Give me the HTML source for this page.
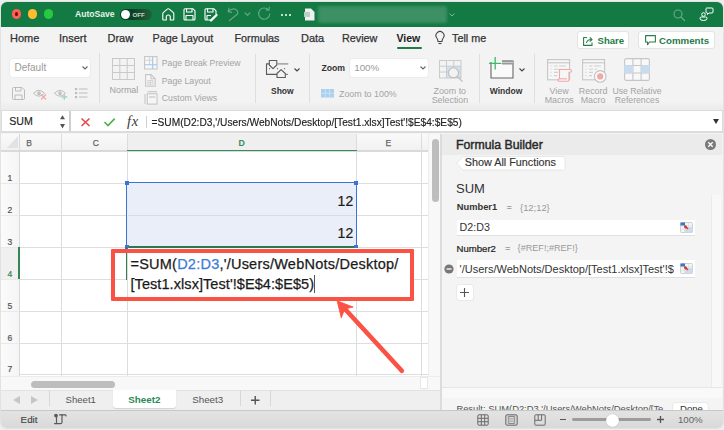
<!DOCTYPE html>
<html><head><meta charset="utf-8">
<style>
*{box-sizing:border-box;margin:0;padding:0}
html,body{width:724px;height:430px;overflow:hidden;background:#eeeeee;font-family:"Liberation Sans",sans-serif;color:#222}
.a{position:absolute}
.t{position:absolute;white-space:nowrap;line-height:1}
svg{position:absolute;overflow:visible}
#win{position:absolute;left:1px;top:2px;width:722px;height:426px;border-radius:6px;overflow:hidden;background:#f3f3f3;box-shadow:0 0 0 1px #e2e2e2}
</style></head><body>
<div id="win"></div>
<!-- TITLE BAR -->
<div class="a" style="left:1px;top:2px;width:722px;height:25px;background:#137a43;border-radius:6px 6px 0 0"></div>
<div class="a" style="left:11.6px;top:9.4px;width:9.7px;height:9.7px;border-radius:50%;background:#fe5f57"></div>
<div class="a" style="left:14.65px;top:12.45px;width:3.6px;height:3.6px;border-radius:50%;background:#7a0a05"></div>
<div class="a" style="left:27.7px;top:9.4px;width:9.7px;height:9.7px;border-radius:50%;background:#febc2e"></div>
<div class="a" style="left:43.7px;top:9.4px;width:9.7px;height:9.7px;border-radius:50%;background:#28c840"></div>
<div class="t" style="left:75px;top:10px;font-size:8.6px;font-weight:bold;color:#e8f2ec">AutoSave</div>
<div class="a" style="left:119.5px;top:9px;width:32px;height:11.3px;border-radius:6px;background:linear-gradient(90deg,#0b4024 40%,#22603c)"></div>
<div class="a" style="left:120.5px;top:10px;width:9px;height:9px;border-radius:50%;background:#fff"></div>
<div class="t" style="left:132.5px;top:11.8px;font-size:6.2px;font-weight:bold;color:#c9d6ce">OFF</div>
<svg style="left:161.5px;top:7.5px" width="13" height="13" viewBox="0 0 13 13" fill="none" stroke="#fff" stroke-width="1.1" stroke-linejoin="round"><path d="M0.8 5.8 Q0.8 5 1.5 4.4 L5.3 1.1 Q6.3 0.3 7.3 1.1 L11.1 4.4 Q11.8 5 11.8 5.8 V11.4 Q11.8 12 11.2 12 H8.3 V9 A2 2 0 0 0 4.3 9 V12 H1.4 Q0.8 12 0.8 11.4 Z"/></svg>
<svg style="left:183px;top:8px" width="13" height="13" viewBox="0 0 13 13" fill="none" stroke="#fff" stroke-width="1.1" stroke-linejoin="round"><path d="M1 2 Q1 0.8 2 0.8 H10 L12 2.8 V11 Q12 12 11 12 H2 Q1 12 1 11 Z"/><path d="M3.5 0.8 V4 H9 V0.8"/><path d="M3 12 V7.5 H10 V12"/></svg>
<svg style="left:204.2px;top:8px" width="13" height="13" viewBox="0 0 13 13" fill="none" stroke="#fff" stroke-width="1.1" stroke-linejoin="round"><path d="M7 12 H2 Q1 12 1 11 V2 Q1 0.8 2 0.8 H10 L12 2.8 V6"/><path d="M3.5 0.8 V4 H9 V0.8"/><path d="M3 12 V7.5 H7"/><path d="M7 12.5 L12.5 7" stroke-width="2.4" stroke-linecap="round"/></svg>
<svg style="left:222px;top:4px" width="54" height="20" viewBox="0 0 54 20" fill="none" stroke="#62a882" stroke-width="1.2" stroke-linecap="round" stroke-linejoin="round"><path d="M6.5 7.2 Q10 3.8 13.5 5.2 Q16.5 6.8 15.5 10 L7.5 16.5"/><path d="M7 4.2 L6.2 7.6 L9.6 8.3"/><path d="M23.2 9 L25.5 11.3 L27.8 9"/><path d="M46.5 6 A5.6 5.6 0 1 0 47.8 10"/><path d="M44.2 5.8 L47 5.9 L47.3 3.2"/></svg>
<div class="a" style="left:281px;top:13.5px;width:2.2px;height:2.2px;border-radius:50%;background:#fff;box-shadow:4px 0 0 #fff,8px 0 0 #fff"></div>
<svg style="left:304px;top:8px" width="11" height="13" viewBox="0 0 11 13"><path d="M1 0.5 H7 L10.5 4 V12.5 H1 Z" fill="#f0f0f0"/><rect x="0" y="4" width="6" height="5" fill="#b5d3c0"/></svg>
<div class="a" style="left:318px;top:6px;width:129px;height:17px;background:#3c9064;filter:blur(1.5px);border-radius:2px"></div>
<svg style="left:449px;top:12.5px" width="6" height="4" viewBox="0 0 6 4" fill="none" stroke="#7bb898" stroke-width="1"><path d="M0.5 0.5 L3 3 L5.5 0.5"/></svg>
<svg style="left:673px;top:8.5px" width="13" height="13" viewBox="0 0 13 13" fill="none" stroke="#6aad89" stroke-width="1.1"><circle cx="5" cy="5" r="4"/><path d="M8 8 L12 12"/></svg>
<svg style="left:699px;top:7px" width="15" height="15" viewBox="0 0 15 15" fill="none" stroke="#fff" stroke-width="1"><circle cx="4.5" cy="7.5" r="1.8"/><path d="M1 11 Q1 10 2.5 10 H6.5 Q8 10 8 11 V11.5 Q8 13.5 4.5 13.5 Q1 13.5 1 11.5 Z"/><path d="M7.5 1 H13 Q14 1 14 2 V5 Q14 6 13 6 H10 L8.5 7.5 V6 Q7 6 7 5 V2 Q7 1 7.5 1 Z"/></svg>

<!-- TABS -->
<div class="t" style="left:10px;top:33px;font-size:11px;color:#333;-webkit-text-stroke:0.25px #333">Home</div>
<div class="t" style="left:59px;top:33px;font-size:11px;color:#333;-webkit-text-stroke:0.25px #333">Insert</div>
<div class="t" style="left:107.5px;top:33px;font-size:11px;color:#333;-webkit-text-stroke:0.25px #333">Draw</div>
<div class="t" style="left:152.5px;top:33px;font-size:10.8px;color:#333;-webkit-text-stroke:0.25px #333">Page Layout</div>
<div class="t" style="left:234.5px;top:33px;font-size:10.8px;color:#333;-webkit-text-stroke:0.25px #333">Formulas</div>
<div class="t" style="left:301px;top:33px;font-size:11px;color:#333;-webkit-text-stroke:0.25px #333">Data</div>
<div class="t" style="left:342px;top:33px;font-size:10.8px;color:#333;-webkit-text-stroke:0.25px #333">Review</div>
<div class="t" style="left:396.5px;top:33px;font-size:10.5px;font-weight:bold;color:#222">View</div>
<div class="a" style="left:396.5px;top:47px;width:25px;height:2px;background:#1f7a46;border-radius:1px"></div>
<svg style="left:434.5px;top:32px" width="10" height="13" viewBox="0 0 10 13" fill="none" stroke="#444" stroke-width="1.1"><path d="M3 9.5 Q3 7.5 1.8 6 A4 4 0 1 1 8.2 6 Q7 7.5 7 9.5 Z"/><path d="M3.5 11.5 H6.5"/></svg>
<div class="t" style="left:452px;top:33px;font-size:10.8px;color:#333;-webkit-text-stroke:0.25px #333">Tell me</div>
<div class="a" style="left:577px;top:31px;width:52px;height:18px;background:#fff;border:1px solid #e3e3e3;border-radius:3px"></div>
<svg style="left:583.4px;top:35.5px" width="11" height="10" viewBox="0 0 11 10" fill="none" stroke="#2a7d4f" stroke-width="1.1" stroke-linejoin="round"><path d="M4 1.5 H0.6 V9.4 H9 V6.5"/><path d="M3.5 7 Q4 3.5 8.5 3.5"/><path d="M6.8 1.3 L9 3.5 L6.8 5.7"/></svg>
<div class="t" style="left:597.5px;top:35.5px;font-size:9.6px;font-weight:bold;color:#1f7a46">Share</div>
<div class="a" style="left:638px;top:31px;width:77px;height:18px;background:#fff;border:1px solid #e3e3e3;border-radius:3px"></div>
<svg style="left:644.6px;top:35.2px" width="11" height="10.5" viewBox="0 0 11 10.5" fill="none" stroke="#2a7d4f" stroke-width="1.1" stroke-linejoin="round"><path d="M0.6 0.6 H10.4 V7 H4.5 L2.5 9.6 V7 H0.6 Z"/></svg>
<div class="t" style="left:659px;top:35.5px;font-size:9.7px;font-weight:bold;color:#1f7a46">Comments</div>

<!-- RIBBON -->
<div class="a" style="left:1px;top:101px;width:722px;height:9.5px;background:linear-gradient(#f3f3f3,#eaeaea)"></div>

<!-- RIBBON CONTENT -->
<div class="a" style="left:9.7px;top:59px;width:80.5px;height:17.5px;background:#fff;border-radius:3px;box-shadow:0 0 0 0.5px #e4e4e4"></div>
<div class="t" style="left:14.5px;top:62.5px;font-size:10px;color:#9a9a9a">Default</div>
<svg style="left:82px;top:66px" width="6" height="4" viewBox="0 0 6 4" fill="none" stroke="#666" stroke-width="1.1"><path d="M0.5 0.5 L3 3 L5.5 0.5"/></svg>
<svg style="left:12px;top:86.5px" width="13" height="13" viewBox="0 0 13 13" fill="none" stroke="#bcbcbc" stroke-width="1"><path d="M0.5 1.5 Q0.5 0.5 1.5 0.5 H10 L12.5 3 V11.5 Q12.5 12.5 11.5 12.5 H1.5 Q0.5 12.5 0.5 11.5 Z"/><path d="M3.5 0.5 V4 H9 V0.5"/><path d="M3 12.5 V8 H10 V12.5"/></svg>
<svg style="left:33px;top:87px" width="14" height="13" viewBox="0 0 14 13" fill="none" stroke="#bcbcbc" stroke-width="1"><path d="M0.5 6.3 Q6 0.5 11.5 6.3 Q6 12 0.5 6.3 Z"/><circle cx="6" cy="6.3" r="1.4" fill="#f3f3f3"/><circle cx="6" cy="6.3" r="0.6" fill="#bcbcbc"/><path d="M8 7.5 L13 12.5 M13 7.5 L8 12.5" stroke="#f2a6a6" stroke-width="1.1"/></svg>
<svg style="left:54px;top:87px" width="14" height="13" viewBox="0 0 14 13" fill="none" stroke="#bcbcbc" stroke-width="1"><path d="M0.5 6.3 Q6 0.5 11.5 6.3 Q6 12 0.5 6.3 Z"/><circle cx="6" cy="6.3" r="1.4" fill="#f3f3f3"/><circle cx="6" cy="6.3" r="0.6" fill="#bcbcbc"/><path d="M10.3 7 V13 M7.3 10 H13.3" stroke="#a3d8b4" stroke-width="1.3"/></svg>
<svg style="left:74.5px;top:88px" width="13" height="10" viewBox="0 0 13 10" fill="none" stroke="#bcbcbc" stroke-width="1"><path d="M4 1 H12.5 M4 5 H12.5 M4 9 H12.5"/><rect x="0.5" y="0.5" width="1.2" height="1.2"/><rect x="0.5" y="4.5" width="1.2" height="1.2"/><rect x="0.5" y="8.5" width="1.2" height="1.2"/></svg>
<div class="a" style="left:99px;top:53px;width:1px;height:50px;background:#dedede"></div>
<svg style="left:112px;top:58px" width="23" height="22" viewBox="0 0 23 22" fill="none" stroke="#c9c9c9" stroke-width="1"><rect x="0.5" y="0.5" width="22" height="21"/><path d="M7.8 0.5 V21.5 M15.2 0.5 V21.5 M0.5 7.5 H22.5 M0.5 14.5 H22.5"/></svg>
<div class="t" style="left:109.6px;top:86.3px;font-size:8.9px;color:#9d9d9d">Normal</div>
<svg style="left:144px;top:56px" width="14" height="14" viewBox="0 0 14 14" fill="none" stroke="#c6c6c6" stroke-width="1.1"><rect x="0.6" y="0.6" width="12.4" height="12.4" fill="#f7f7f7"/><path d="M5.5 0.6 V8.5 M0.6 4.3 H8.5" stroke="#d4d4d4"/><path d="M8.7 0.6 V13 M0.6 8.7 H13" stroke="#9fc6ea"/></svg>
<div class="t" style="left:161.8px;top:59.3px;font-size:8.7px;color:#a3a3a3">Page Break Preview</div>
<svg style="left:145px;top:74.3px" width="11" height="13" viewBox="0 0 11 13" fill="none" stroke="#c6c6c6" stroke-width="1.1"><path d="M0.6 0.6 H6 L10.2 4.8 V12.3 H0.6 Z" fill="#f6f6f6"/><path d="M6 0.6 V4.8 H10.2"/><path d="M2.8 6.5 H8 V11 H2.8 Z M2.8 8.7 H8 M5.4 6.5 V11" stroke="#d0d0d0" stroke-width="0.9"/></svg>
<div class="t" style="left:161.8px;top:76.8px;font-size:8.7px;color:#a3a3a3">Page Layout</div>
<svg style="left:144px;top:91.3px" width="14" height="14" viewBox="0 0 14 14" fill="none" stroke="#c6c6c6" stroke-width="1.1"><path d="M3.5 0.7 H13"/><rect x="3.3" y="2.8" width="9.7" height="10.3" fill="#f6f6f6"/><rect x="5" y="5" width="6.3" height="2" fill="#d8d8d8" stroke="none"/><path d="M1 3 V13"/></svg>
<div class="t" style="left:161.8px;top:94.3px;font-size:8.7px;color:#a3a3a3">Custom Views</div>
<div class="a" style="left:254.5px;top:54px;width:1px;height:49px;background:#dedede"></div>
<svg style="left:262px;top:56px" width="40" height="26" viewBox="0 0 40 26" fill="none" stroke="#5a5a5a" stroke-width="1.1" stroke-linejoin="round"><path d="M7.5 7.9 H4.5 V18.4 H15"/><path d="M7.3 4.5 H14.8 V9 L11 12.7 L7.3 9 Z"/><path d="M15.4 7.9 H26.3" stroke="#888" stroke-width="1.2"/><path d="M7.5 12 V13.2 M15.5 12 V13.2 M22.5 12 V13.2" stroke="#777"/><path d="M15 17.5 L19.1 13.6 L23.3 17.5 V21.5 H15 Z"/><path d="M23.3 18.4 H26" stroke="#777"/></svg>
<svg style="left:293.8px;top:67.8px" width="6" height="4" viewBox="0 0 6 4" fill="none" stroke="#444" stroke-width="1.1"><path d="M0.5 0.5 L3 3 L5.5 0.5"/></svg>
<div class="t" style="left:271px;top:86.8px;font-size:8.5px;font-weight:bold;color:#333">Show</div>
<div class="a" style="left:309px;top:54px;width:1px;height:49px;background:#dedede"></div>
<div class="t" style="left:321.4px;top:64.1px;font-size:8.7px;font-weight:bold;color:#333">Zoom</div>
<div class="a" style="left:349.6px;top:58.7px;width:78.2px;height:18.2px;background:#fff;border-radius:3px;box-shadow:0 0 0 0.5px #e4e4e4"></div>
<div class="t" style="left:354.2px;top:62.6px;font-size:9.8px;color:#9a9a9a">100%</div>
<svg style="left:419.5px;top:66px" width="6" height="4" viewBox="0 0 6 4" fill="none" stroke="#666" stroke-width="1.1"><path d="M0.5 0.5 L3 3 L5.5 0.5"/></svg>
<svg style="left:321px;top:89px" width="13" height="8.5" viewBox="0 0 13 8.5"><rect x="0" y="0" width="13" height="8.5" fill="#aad0ee"/><path d="M4.3 0 V8.5 M8.7 0 V8.5 M0 4.25 H13" stroke="#d6e8f6" stroke-width="0.7"/></svg>
<div class="t" style="left:339px;top:89.5px;font-size:8.9px;color:#a3a3a3">Zoom to 100%</div>
<svg style="left:438.5px;top:60.3px" width="25" height="23" viewBox="0 0 25 23" fill="none" stroke="#cbcbcb" stroke-width="1"><rect x="7.5" y="6.2" width="14.5" height="11.8" fill="#cfe1f2" stroke="none"/><rect x="0.5" y="0.5" width="21.5" height="17.5"/><path d="M7.5 0.5 V18 M14.8 0.5 V18 M0.5 6.2 H22 M0.5 12 H22"/><circle cx="14.5" cy="12.8" r="5" fill="#f2f2f2" stroke="#bdbdbd" stroke-width="1.1"/><path d="M18.2 16.5 L23.5 21.5" stroke="#bdbdbd" stroke-width="1.1"/></svg>
<div class="t" style="left:433.5px;top:86.5px;font-size:8.9px;color:#a3a3a3">Zoom to</div>
<div class="t" style="left:431.7px;top:95.6px;font-size:8.9px;color:#a3a3a3">Selection</div>
<div class="a" style="left:479px;top:54px;width:1px;height:49px;background:#dedede"></div>
<svg style="left:488.9px;top:56.5px" width="26" height="22" viewBox="0 0 26 22" fill="none"><path d="M2 5 V21 H24 V4 H13" stroke="#666" stroke-width="1.1" fill="#fafafa"/><rect x="13" y="3.5" width="11" height="4" fill="#9a9a9a"/><path d="M13 5.5 H24" stroke="#d8d8d8" stroke-width="0.8"/><path d="M6.2 0 V12.5 M0 6.3 H12.4" stroke="#3cb96b" stroke-width="1.3"/></svg>
<svg style="left:518.9px;top:67.5px" width="6" height="4" viewBox="0 0 6 4" fill="none" stroke="#444" stroke-width="1.1"><path d="M0.5 0.5 L3 3 L5.5 0.5"/></svg>
<div class="t" style="left:489.8px;top:86.8px;font-size:8.5px;font-weight:bold;color:#333">Window</div>
<div class="a" style="left:534px;top:54px;width:1px;height:49px;background:#dedede"></div>
<svg style="left:547px;top:58.6px" width="26" height="23" viewBox="0 0 26 23" fill="none" stroke="#c6c6c6" stroke-width="1.1"><rect x="0.6" y="0.6" width="22" height="20.2" fill="#f6f6f6"/><path d="M0.6 3.8 H22.6"/><path d="M3.5 7 H4.5 M7 7 H10.5 M12 7 H19 M3.5 10.2 H4.5 M7 10.2 H12 M3.5 13.4 H4.5 M7 13.4 H11 M3.5 16.6 H4.5 M7 16.6 H10" stroke="#d0d0d0"/><path d="M12.5 10.5 H23 Q24.5 10.5 24.5 12 Q24.5 13.2 23 13.2 H22 V20.5 Q22 22.3 20.3 22.3 H12.5 Q11 22.3 11 21 Q11 19.8 12.5 19.8 Z" stroke="#f0a6a6" fill="#f6f6f6"/><path d="M12.5 19.8 H20" stroke="#f0a6a6"/></svg>
<div class="t" style="left:549.5px;top:86.5px;font-size:8.9px;color:#a3a3a3">View</div>
<div class="t" style="left:544.7px;top:95.8px;font-size:8.9px;color:#a3a3a3">Macros</div>
<svg style="left:581.8px;top:58.6px" width="26" height="24" viewBox="0 0 26 24" fill="none" stroke="#c6c6c6" stroke-width="1.1"><rect x="0.6" y="0.6" width="22" height="20.2" fill="#f6f6f6"/><path d="M0.6 3.8 H22.6"/><path d="M3.5 7 H4.5 M7 7 H10.5 M12 7 H19 M3.5 10.2 H4.5 M7 10.2 H11 M12.5 10.2 H15 M3.5 13.4 H4.5 M7 13.4 H11 M3.5 16.6 H4.5 M7 16.6 H10" stroke="#d0d0d0"/><circle cx="18.2" cy="17.4" r="5.8" fill="#fafafa" stroke="#c2c2c2"/><circle cx="18.2" cy="17.4" r="3.1" fill="#f0a8a8" stroke="none"/></svg>
<div class="t" style="left:578.8px;top:86.5px;font-size:8.9px;color:#a3a3a3">Record</div>
<div class="t" style="left:580.7px;top:95.8px;font-size:8.9px;color:#a3a3a3">Macro</div>
<svg style="left:624px;top:58px" width="26" height="23" viewBox="0 0 26 23" fill="none" stroke="#c6c6c6" stroke-width="1.1"><rect x="0.6" y="0.6" width="24.8" height="21.8" rx="1.5" fill="#f8f8f8"/><path d="M8.9 0.6 V22.4 M17.1 0.6 V22.4 M0.6 7.5 H25.4 M0.6 15 H25.4"/><rect x="0.2" y="7.2" width="8.7" height="7.9" fill="#c8dcf0" stroke="none"/><rect x="17.1" y="7.2" width="8.7" height="7.9" fill="#c8dcf0" stroke="none"/></svg>
<div class="t" style="left:612.4px;top:86.5px;font-size:8.7px;color:#a3a3a3">Use Relative</div>
<div class="t" style="left:614.8px;top:95.8px;font-size:8.7px;color:#a3a3a3">References</div>

<!-- FORMULA BAR -->
<div class="a" style="left:1px;top:110.2px;width:722px;height:23.3px;background:#dcdcdc"></div>
<div class="a" style="left:2px;top:111px;width:67.5px;height:19.6px;background:#fff"></div>
<div class="a" style="left:69.3px;top:111px;width:1.7px;height:19.6px;background:#cfcfcf"></div>
<div class="a" style="left:71px;top:111px;width:651px;height:19.8px;background:#fff"></div>
<div class="t" style="left:9.3px;top:116.2px;font-size:10.6px;color:#222;-webkit-text-stroke:0.15px #222">SUM</div>
<svg style="left:60px;top:114.5px" width="5" height="14" viewBox="0 0 5 14" fill="#555"><path d="M2.5 0.3 L5 4.3 H0 Z M2.5 13.5 L5 9 H0 Z"/></svg>
<svg style="left:80.8px;top:117.8px" width="9" height="8.5" viewBox="0 0 9 8.5" fill="none" stroke="#e04a4a" stroke-width="1.6"><path d="M0.5 0.5 L8.5 8 M8.5 0.5 L0.5 8"/></svg>
<svg style="left:103.6px;top:117.8px" width="11.2" height="8.5" viewBox="0 0 11.2 8.5" fill="none" stroke="#4bb04f" stroke-width="1.6"><path d="M0.5 4 L4 7.5 L10.7 0.6"/></svg>
<div class="t" style="left:127px;top:113.8px;font-family:'Liberation Serif',serif;font-style:italic;font-size:14.5px;color:#3a3a3a;letter-spacing:0.6px">fx</div>
<div class="a" style="left:145.5px;top:116px;width:1px;height:11.5px;background:#d0d0d0"></div>
<div class="t" style="left:151.6px;top:117.8px;font-size:10.2px;color:#222;-webkit-text-stroke:0.15px #222;transform:scaleY(1.1);transform-origin:0 50%">=SUM(D2:D3,'/Users/WebNots/Desktop/[Test1.xlsx]Test'!$E$4:$E$5)</div>
<svg style="left:712.5px;top:119px" width="6" height="5" viewBox="0 0 6 5" fill="#333"><path d="M0 0 H6 L3 5 Z"/></svg>

<!-- GRID -->
<div class="a" style="left:1px;top:133.5px;width:427px;height:242px;background:#fff"></div>
<div class="a" style="left:1px;top:133.5px;width:427px;height:17px;background:linear-gradient(#fafafa,#f1f1f1)"></div>
<div class="a" style="left:127px;top:133.5px;width:229px;height:17px;background:#efefef"></div>
<div class="a" style="left:1px;top:150px;width:427px;height:1.5px;background:#dadada"></div>
<div class="a" style="left:1px;top:151.5px;width:18px;height:224px;background:linear-gradient(90deg,#fafafa,#f3f3f3)"></div>
<div class="a" style="left:1px;top:247px;width:18px;height:32px;background:#efefef"></div>
<div class="a" style="left:18.6px;top:133.5px;width:1.2px;height:242px;background:#d8d8d8"></div>
<svg style="left:7px;top:136px" width="11" height="12" viewBox="0 0 11 12"><path d="M11 0 V12 H0 Z" fill="#e2e2e2"/></svg>
<div class="a" style="left:61px;top:133.5px;width:1px;height:242px;background:#dcdcdc"></div>
<div class="a" style="left:127px;top:133.5px;width:1px;height:242px;background:#dcdcdc"></div>
<div class="a" style="left:356px;top:133.5px;width:1px;height:242px;background:#dcdcdc"></div>
<div class="a" style="left:421px;top:133.5px;width:1px;height:242px;background:#dcdcdc"></div>
<div class="a" style="left:1px;top:182.7px;width:427px;height:1px;background:#dedede"></div>
<div class="a" style="left:1px;top:214.7px;width:427px;height:1px;background:#dedede"></div>
<div class="a" style="left:1px;top:246.7px;width:427px;height:1px;background:#dedede"></div>
<div class="a" style="left:1px;top:278.7px;width:427px;height:1px;background:#dedede"></div>
<div class="a" style="left:1px;top:310.7px;width:427px;height:1px;background:#dedede"></div>
<div class="a" style="left:1px;top:342.7px;width:427px;height:1px;background:#dedede"></div>
<div class="a" style="left:1px;top:374.3px;width:427px;height:1px;background:#dedede"></div>
<div class="a" style="left:1px;top:151.5px;width:17.6px;height:223px;background:linear-gradient(90deg,#fbfbfb,#f5f5f5)"></div>
<div class="a" style="left:1px;top:246.7px;width:17.6px;height:32px;background:#f0f0f0"></div>
<div class="a" style="left:1px;top:182.7px;width:17.6px;height:1px;background:#e9e9e9"></div>
<div class="a" style="left:1px;top:214.7px;width:17.6px;height:1px;background:#e9e9e9"></div>
<div class="a" style="left:1px;top:246.7px;width:17.6px;height:1px;background:#e9e9e9"></div>
<div class="a" style="left:1px;top:278.7px;width:17.6px;height:1px;background:#e9e9e9"></div>
<div class="a" style="left:1px;top:310.7px;width:17.6px;height:1px;background:#e9e9e9"></div>
<div class="a" style="left:1px;top:342.7px;width:17.6px;height:1px;background:#e9e9e9"></div>
<div class="t" style="left:26.3px;top:138.8px;font-size:8.5px;color:#666;-webkit-text-stroke:0.25px #666">B</div>
<div class="t" style="left:92.8px;top:138.8px;font-size:8.5px;color:#666;-webkit-text-stroke:0.25px #666">C</div>
<div class="a" style="left:127px;top:149.8px;width:229.5px;height:1.7px;background:#3a8a5c"></div>
<div class="t" style="left:238.5px;top:138.8px;font-size:8.8px;font-weight:bold;color:#3a8a5c">D</div>
<div class="t" style="left:385.5px;top:138.8px;font-size:8.5px;color:#666;-webkit-text-stroke:0.25px #666">E</div>
<div class="t" style="left:7.6px;top:173.7px;font-size:8.5px;color:#555;-webkit-text-stroke:0.2px #555">1</div>
<div class="t" style="left:7.6px;top:205.7px;font-size:8.5px;color:#555;-webkit-text-stroke:0.2px #555">2</div>
<div class="t" style="left:7.6px;top:237.7px;font-size:8.5px;color:#555;-webkit-text-stroke:0.2px #555">3</div>
<div class="t" style="left:7.6px;top:269.7px;font-size:8.5px;color:#338656;-webkit-text-stroke:0.2px #338656">4</div>
<div class="a" style="left:17.6px;top:247px;width:2px;height:32px;background:#338656"></div>
<div class="t" style="left:7.6px;top:301.7px;font-size:8.5px;color:#555;-webkit-text-stroke:0.2px #555">5</div>
<div class="t" style="left:7.6px;top:333.7px;font-size:8.5px;color:#555;-webkit-text-stroke:0.2px #555">6</div>
<div class="t" style="left:7.6px;top:365.2px;font-size:8.5px;color:#555;-webkit-text-stroke:0.2px #555">7</div>
<!-- selection -->
<div class="a" style="left:126px;top:182px;width:231px;height:65.5px;background:#e9eef9;border:1.8px solid #3c73d4"></div>
<div class="a" style="left:128px;top:214.6px;width:227px;height:1px;background:#d6dbe6"></div>
<div class="a" style="left:125px;top:181px;width:4px;height:4px;background:#3c73d4"></div>
<div class="a" style="left:354px;top:181px;width:4px;height:4px;background:#3c73d4"></div>
<div class="a" style="left:125px;top:244.5px;width:4px;height:4px;background:#3c73d4"></div>
<div class="a" style="left:354px;top:244.5px;width:4px;height:4px;background:#3c73d4"></div>
<div class="a" style="left:129px;top:245.7px;width:225px;height:2px;background:#2a7a4c"></div>
<div class="t" style="left:337.6px;top:193.8px;font-size:14px;color:#1a1a1a;-webkit-text-stroke:0.2px #1a1a1a">12</div>
<div class="t" style="left:337.6px;top:225.6px;font-size:14px;color:#1a1a1a;-webkit-text-stroke:0.2px #1a1a1a">12</div>
<!-- editor + red box -->
<div class="a" style="left:128px;top:248px;width:282px;height:49.5px;background:#fff"></div>
<div class="a" style="left:125.8px;top:247px;width:1.7px;height:32.5px;background:#2f7f50"></div>
<div class="a" style="left:111px;top:248.7px;width:303px;height:52.7px;border:4px solid #fa5345;border-radius:1px"></div>
<div class="t" style="left:130.5px;top:256.5px;font-size:14.5px;letter-spacing:0.23px;color:#1a1a1a;-webkit-text-stroke:0.25px #1a1a1a">=SUM(<span style="color:#3d7bd6;-webkit-text-stroke:0.25px #3d7bd6">D2:D3</span>,'/Users/WebNots/Desktop/</div>
<div class="t" style="left:130.5px;top:276.5px;font-size:14.5px;letter-spacing:0.07px;color:#1a1a1a;-webkit-text-stroke:0.25px #1a1a1a">[Test1.xlsx]Test'!$E$4:$E$5)</div>
<div class="a" style="left:314.2px;top:275px;width:0.9px;height:18.3px;background:#555"></div>
<!-- arrow -->
<svg style="left:0;top:0" width="724" height="430" viewBox="0 0 724 430"><path d="M401.8 370.8 L345 309" stroke="#fa5345" stroke-width="4.6" stroke-linecap="round" fill="none"/><path d="M337.1 300.8 L353.2 307.1 L347.8 308.2 L343.4 312.4 L341.3 317.9 Z" fill="#fa5345" stroke="#fa5345" stroke-width="0.8" stroke-linejoin="round"/></svg>
<!-- vertical scrollbar -->
<div class="a" style="left:428px;top:133.5px;width:12px;height:242px;background:#f8f8f8;border-left:1px solid #ececec"></div>
<div class="a" style="left:431.7px;top:138.7px;width:7px;height:63.5px;border-radius:3.5px;background:#bdbdbd"></div>
<!-- horizontal scrollbar -->
<div class="a" style="left:1px;top:375.5px;width:439px;height:14px;background:#f8f8f8;border-top:1px solid #ececec"></div>
<div class="a" style="left:31.4px;top:380.8px;width:83.5px;height:7.2px;border-radius:3.6px;background:#bdbdbd"></div>
<div class="a" style="left:420px;top:376.5px;width:8px;height:12px;background:#fff;border:1px solid #e6e6e6"></div>
<!-- panel separator -->
<div class="a" style="left:440px;top:133.5px;width:2px;height:276px;background:#dcdcdc"></div>

<!-- SHEET TABS -->
<div class="a" style="left:1px;top:389.5px;width:439px;height:20px;background:#efefef;border-top:1px solid #e2e2e2"></div>
<svg style="left:12.6px;top:396px" width="7" height="8" viewBox="0 0 7 8" fill="#c6c6c6"><path d="M7 0 V8 L0 4 Z"/></svg>
<svg style="left:31.4px;top:396px" width="7" height="8" viewBox="0 0 7 8" fill="#c6c6c6"><path d="M0 0 V8 L7 4 Z"/></svg>
<div class="a" style="left:49.2px;top:390px;width:1px;height:16px;background:#d8d8d8"></div>
<div class="t" style="left:65.5px;top:394.8px;font-size:9.6px;color:#555">Sheet1</div>
<div class="a" style="left:112.8px;top:389.5px;width:63px;height:18px;background:#fff;border-radius:0 0 3px 3px;box-shadow:0 1px 1px rgba(0,0,0,0.12)"></div>
<div class="t" style="left:128.3px;top:394.8px;font-size:9.8px;font-weight:bold;color:#2a8a55">Sheet2</div>
<div class="t" style="left:192.2px;top:394.8px;font-size:9.8px;color:#555">Sheet3</div>
<div class="a" style="left:239.5px;top:390px;width:1px;height:16px;background:#d8d8d8"></div>
<svg style="left:250.8px;top:395.5px" width="8.5" height="8.5" viewBox="0 0 8.5 8.5" stroke="#555" stroke-width="1.4"><path d="M4.25 0 V8.5 M0 4.25 H8.5"/></svg>
<div class="a" style="left:270px;top:390px;width:1px;height:16px;background:#d8d8d8"></div>

<!-- FORMULA BUILDER -->
<div class="a" style="left:442px;top:133.5px;width:280px;height:276px;background:#f4f4f4"></div>
<div class="a" style="left:442px;top:133.5px;width:280px;height:21.7px;background:#ebebeb"></div>
<div class="t" style="left:456px;top:139.2px;font-size:12.3px;color:#2a2a2a;-webkit-text-stroke:0.45px #2a2a2a">Formula Builder</div>
<svg style="left:704.8px;top:139.3px" width="11" height="11" viewBox="0 0 11 11"><circle cx="5.5" cy="5.5" r="5.5" fill="#7a7a7a"/><path d="M3.3 3.3 L7.7 7.7 M7.7 3.3 L3.3 7.7" stroke="#fff" stroke-width="1.3"/></svg>
<svg style="left:456px;top:155.5px" width="110" height="15" viewBox="0 0 110 15"><path d="M7 0.5 H107.5 Q109 0.5 109 2 V12.5 Q109 14 107.5 14 H7 L0.8 7.25 Z" fill="#fff" stroke="#e2e2e2" stroke-width="0.8"/></svg>
<div class="t" style="left:464.8px;top:157px;font-size:10.8px;color:#333;-webkit-text-stroke:0.15px #333">Show All Functions</div>
<div class="t" style="left:456px;top:181.5px;font-size:13px;color:#333">SUM</div>
<div class="t" style="left:456.8px;top:203.2px;font-size:9.3px;font-weight:bold;color:#333">Number1</div>
<div class="t" style="left:506.5px;top:203.2px;font-size:9.3px;color:#666">=</div>
<div class="t" style="left:520px;top:203.2px;font-size:9.4px;color:#999">{12;12}</div>
<div class="a" style="left:456.5px;top:219.8px;width:238.5px;height:15.7px;background:#fff;box-shadow:0 0.5px 0.5px rgba(0,0,0,0.08)"></div>
<div class="t" style="left:459.6px;top:222.3px;font-size:10.7px;color:#333">D2:D3</div>
<svg style="left:680px;top:222px" width="13" height="11" viewBox="0 0 13 11"><rect x="0.5" y="0.5" width="12" height="10" rx="1" fill="#f4f4f4" stroke="#c4c4c4" stroke-width="0.8"/><rect x="5" y="5" width="7.5" height="5.5" fill="#c9dcf0"/><path d="M4.5 0.5 V10.5 M8.5 0.5 V10.5 M0.5 4 H12.5 M0.5 7.5 H12.5" stroke="#dcdcdc" stroke-width="0.6"/><rect x="0.5" y="0.5" width="4.5" height="3" fill="#3b78c8"/><path d="M4.5 3.5 L8 7" stroke="#d23c3c" stroke-width="1.6"/><circle cx="5.5" cy="5" r="1.4" fill="#d23c3c"/></svg>
<div class="t" style="left:456.5px;top:244px;font-size:9.6px;color:#222;-webkit-text-stroke:0.2px #222">Number2</div>
<div class="t" style="left:505px;top:244px;font-size:9.3px;color:#666">=</div>
<div class="t" style="left:517.6px;top:244px;font-size:9.1px;color:#999">{#REF!;#REF!}</div>
<svg style="left:443.5px;top:263.8px" width="10" height="10" viewBox="0 0 10 10"><circle cx="5" cy="5" r="4.6" fill="#777"/><path d="M2.5 5 H7.5" stroke="#fff" stroke-width="1.3"/></svg>
<div class="a" style="left:456.5px;top:260px;width:238.5px;height:16.7px;background:#fff;box-shadow:0 0.5px 0.5px rgba(0,0,0,0.08)"></div>
<div class="t" style="left:459.6px;top:263.5px;font-size:11px;color:#333">'/Users/WebNots/Desktop/[Test1.xlsx]Test'!$</div>
<svg style="left:680px;top:263px" width="13" height="11" viewBox="0 0 13 11"><rect x="0.5" y="0.5" width="12" height="10" rx="1" fill="#f4f4f4" stroke="#c4c4c4" stroke-width="0.8"/><rect x="5" y="5" width="7.5" height="5.5" fill="#c9dcf0"/><path d="M4.5 0.5 V10.5 M8.5 0.5 V10.5 M0.5 4 H12.5 M0.5 7.5 H12.5" stroke="#dcdcdc" stroke-width="0.6"/><rect x="0.5" y="0.5" width="4.5" height="3" fill="#3b78c8"/><path d="M4.5 3.5 L8 7" stroke="#d23c3c" stroke-width="1.6"/><circle cx="5.5" cy="5" r="1.4" fill="#d23c3c"/></svg>
<div class="a" style="left:456.5px;top:285.3px;width:16px;height:14.7px;background:#fff;border-radius:2px;box-shadow:0 0 0 0.5px #ddd"></div>
<svg style="left:460px;top:288px" width="9" height="9" viewBox="0 0 9 9" stroke="#555" stroke-width="1.1"><path d="M4.5 0 V9 M0 4.5 H9"/></svg>
<div class="a" style="left:711px;top:195px;width:10px;height:192px;background:#f8f8f8;border-left:1px solid #ebebeb"></div>
<div class="a" style="left:442px;top:387px;width:280px;height:11px;background:#f9f9f9;border-top:1px solid #e6e6e6"></div>
<div class="t" style="left:456.4px;top:404px;font-size:9.4px;color:#555">Result: SUM(D2:D3,'/Users/WebNots/Desktop/[Te</div>
<div class="a" style="left:673.3px;top:402.9px;width:34.6px;height:12px;background:#fff;border-radius:3px;box-shadow:0 0 0 0.5px #ddd"></div>
<div class="t" style="left:680px;top:404px;font-size:9.6px;color:#333">Done</div>

<!-- STATUS BAR -->
<div class="a" style="left:1px;top:409.5px;width:722px;height:18.5px;background:linear-gradient(#e3e3e3,#d9d9d9);border-top:1px solid #c8c8c8;border-radius:0 0 6px 6px"></div>
<div class="t" style="left:20.6px;top:414.6px;font-size:9.8px;color:#444;-webkit-text-stroke:0.15px #444">Edit</div>
<svg style="left:48px;top:410px" width="24" height="18" viewBox="0 0 24 18" fill="none" stroke="#5a5a5a" stroke-width="1.2" stroke-linecap="round"><circle cx="8" cy="5.6" r="1.9" fill="#5a5a5a" stroke="none"/><path d="M8.5 6.5 V13.5"/><path d="M6.5 13.6 H12.5 Q13.8 13.6 14 12.5 V4.8 H17.5 Q18.2 5 18 6" /><path d="M11.5 4.8 H14"/></svg>
<svg style="left:476.5px;top:413.8px" width="12" height="12" viewBox="0 0 12 12" fill="none" stroke="#6a6a6a" stroke-width="1"><rect x="0.8" y="0.8" width="10.4" height="10.4" rx="1.2"/><path d="M4.3 0.8 V11.2 M7.7 0.8 V11.2 M0.8 4.3 H11.2 M0.8 7.7 H11.2"/></svg>
<svg style="left:504.7px;top:413.8px" width="13" height="12" viewBox="0 0 13 12" fill="none" stroke="#6a6a6a" stroke-width="1"><rect x="0.8" y="0.8" width="11.4" height="10.4" rx="1.2" fill="#d2d2d2"/><rect x="3.8" y="2.5" width="5.4" height="7" fill="#dcdcdc" stroke="#777" stroke-width="0.8"/><path d="M4.5 4.5 H8.5 M4.5 6 H8.5 M4.5 7.5 H8.5" stroke="#999" stroke-width="0.6"/></svg>
<svg style="left:533.5px;top:413.8px" width="12" height="12" viewBox="0 0 12 12" fill="none" stroke="#6a6a6a" stroke-width="1"><rect x="0.8" y="0.8" width="10.4" height="10.4" rx="0.8"/><path d="M4.2 0.8 V6.3 M7.6 0.8 V6.3 H0.8"/></svg>
<div class="a" style="left:559.8px;top:418.8px;width:6.6px;height:1.4px;background:#555"></div>
<div class="a" style="left:572.3px;top:418.3px;width:79px;height:2.8px;border-radius:1.4px;background:#9c9c9c"></div>
<div class="a" style="left:605.5px;top:413.5px;width:13px;height:13px;border-radius:50%;background:#fff;box-shadow:0 0 1px rgba(0,0,0,0.3)"></div>
<svg style="left:657.4px;top:416.2px" width="7" height="7" viewBox="0 0 7 7" stroke="#555" stroke-width="1.3"><path d="M3.5 0 V7 M0 3.5 H7"/></svg>
<div class="t" style="left:677.9px;top:415.3px;font-size:9.7px;color:#666">100%</div>
</body></html>
